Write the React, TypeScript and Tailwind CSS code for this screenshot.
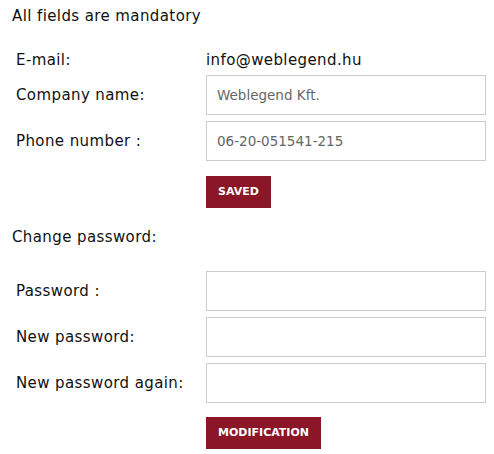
import { ReactNode } from 'react';

const font = { fontFamily: '"DejaVu Sans", "Noto Sans", Arial, sans-serif' };

const Row = ({ label, children }: { label: string; children: ReactNode }) => (
  <div className="flex items-center">
    <div className="w-[194px] shrink-0 pl-[4px] text-[15px] tracking-[0.4px] text-[#111]">{label}</div>
    <div className="w-[280px]">{children}</div>
  </div>
);

const Field = ({ value = '', type = 'text' }: { value?: string; type?: string }) => (
  <input
    type={type}
    defaultValue={value}
    className="block h-[40px] w-full border border-[#cccccc] bg-white px-[10px] text-[13.5px] text-[#666] outline-none"
    style={font}
  />
);

const Button = ({ children }: { children: ReactNode }) => (
  <button className="h-[32px] bg-[#8a1628] px-[12px] text-[11px] font-bold uppercase text-white">
    {children}
  </button>
);

export default function App() {
  return (
    <div className="min-h-[454px] w-[494px] bg-white pl-[12px] pt-[5px]" style={font}>
      <p className="text-[15px] leading-[22px] tracking-[0.4px] text-[#111]">All fields are mandatory</p>

      <div className="mt-[23px] flex flex-col gap-[5px]">
        <div className="flex h-[20px] items-center">
          <div className="w-[194px] shrink-0 pl-[4px] text-[15px] tracking-[0.4px] text-[#111]">E-mail:</div>
          <div className="text-[15px] tracking-[0.4px] text-[#111]">info@weblegend.hu</div>
        </div>
        <Row label="Company name:">
          <Field value="Weblegend Kft." />
        </Row>
        <div className="mt-[1px]">
          <Row label="Phone number :">
            <Field value="06-20-051541-215" />
          </Row>
        </div>
        <div className="mt-[10px] pl-[194px]">
          <Button>Saved</Button>
        </div>
      </div>

      <p className="mt-[18px] text-[15px] leading-[22px] tracking-[0.4px] text-[#111]">Change password:</p>

      <div className="mt-[23px] flex flex-col gap-[6px]">
        <Row label="Password :">
          <Field type="password" />
        </Row>
        <Row label="New password:">
          <Field type="password" />
        </Row>
        <Row label="New password again:">
          <Field type="password" />
        </Row>
        <div className="mt-[8px] pl-[194px]">
          <Button>Modification</Button>
        </div>
      </div>
    </div>
  );
}
